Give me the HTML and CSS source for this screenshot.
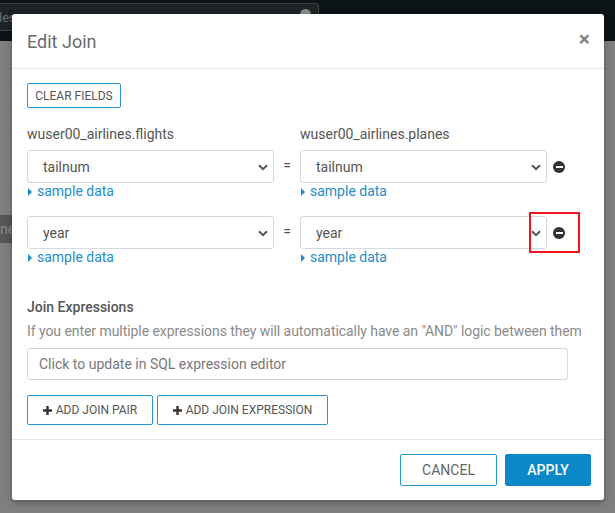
FILE: index.html
```html
<!DOCTYPE html>
<html>
<head>
<meta charset="utf-8">
<link rel="stylesheet" href="styles.css">
</head>
<body>
<div class="page">
  <header class="topbar">
    <div class="search"><span class="search-text">les</span><i class="search-dot"></i></div>
  </header>
  <div class="bg-btn">ne</div>

  <div class="modal">
    <div class="modal-header">
      <h2 class="modal-title">Edit Join</h2>
      <span class="close">&times;</span>
    </div>
    <div class="modal-body">
      <button class="btn btn-outline btn-sm">CLEAR FIELDS</button>

      <div class="pair-grid">
        <div class="tbl-label">wuser00_airlines.flights</div>
        <div></div>
        <div class="tbl-label">wuser00_airlines.planes</div>
        <div></div>
      </div>

      <div class="pair-grid pair">
        <div class="field">
          <div class="select"><span>tailnum</span><svg class="chev" width="10" height="7" viewBox="0 0 10 7"><polyline points="1,1.2 5,5.2 9,1.2" fill="none" stroke="#555" stroke-width="2"/></svg></div>
          <a class="sample"><i class="tri"></i>sample data</a>
        </div>
        <div class="eq">=</div>
        <div class="field">
          <div class="select"><span>tailnum</span><svg class="chev" width="10" height="7" viewBox="0 0 10 7"><polyline points="1,1.2 5,5.2 9,1.2" fill="none" stroke="#555" stroke-width="2"/></svg></div>
          <a class="sample"><i class="tri"></i>sample data</a>
        </div>
        <div class="rm"><i class="minus"></i></div>
      </div>

      <div class="pair-grid pair pair-2">
        <div class="field">
          <div class="select"><span>year</span><svg class="chev" width="10" height="7" viewBox="0 0 10 7"><polyline points="1,1.2 5,5.2 9,1.2" fill="none" stroke="#555" stroke-width="2"/></svg></div>
          <a class="sample"><i class="tri"></i>sample data</a>
        </div>
        <div class="eq">=</div>
        <div class="field">
          <div class="select"><span>year</span><svg class="chev" width="10" height="7" viewBox="0 0 10 7"><polyline points="1,1.2 5,5.2 9,1.2" fill="none" stroke="#555" stroke-width="2"/></svg></div>
          <a class="sample"><i class="tri"></i>sample data</a>
        </div>
        <div class="rm"><i class="minus"></i></div>
        <div class="highlight"></div>
      </div>

      <h3 class="section-title">Join Expressions</h3>
      <p class="help">If you enter multiple expressions they will automatically have an "AND" logic between them</p>
      <div class="expr-input">Click to update in SQL expression editor</div>

      <div class="actions">
        <button class="btn btn-outline btn-add"><svg width="9" height="9" viewBox="0 0 9 9"><path d="M3.3 0h2.4v3.3H9v2.4H5.7V9H3.3V5.7H0V3.3h3.3z" fill="#333"/></svg>ADD JOIN PAIR</button>
        <button class="btn btn-outline btn-add"><svg width="9" height="9" viewBox="0 0 9 9"><path d="M3.3 0h2.4v3.3H9v2.4H5.7V9H3.3V5.7H0V3.3h3.3z" fill="#333"/></svg>ADD JOIN EXPRESSION</button>
      </div>
    </div>
    <div class="modal-footer">
      <button class="btn btn-outline btn-lg">CANCEL</button>
      <button class="btn btn-primary btn-lg">APPLY</button>
    </div>
  </div>
</div>
</body>
</html>
```
FILE: styles.css
```css
* { box-sizing: border-box; }
html, body { margin: 0; padding: 0; }
body {
  width: 615px;
  height: 513px;
  overflow: hidden;
  background: #7f7f7f;
  font-family: Roboto, "Liberation Sans", sans-serif;
  color: #555;
}
.page { position: relative; width: 615px; height: 513px; }

.topbar {
  height: 41px;
  background: #0b1317;
  padding-top: 3px;
}
.search {
  width: 319px;
  height: 28px;
  background: #1e2326;
  border: 1px solid #3c4043;
  border-left: none;
  border-radius: 0 3px 3px 0;
  display: flex;
  align-items: center;
  font-size: 13px;
  color: #6d7174;
}
.search-text { margin-left: -1px; }
.search-dot {
  margin-left: auto;
  margin-right: 7px;
  margin-top: -6px;
  width: 11px;
  height: 11px;
  border-radius: 50%;
  background: #8a8c8e;
}
.bg-btn {
  margin-top: 174px;
  width: 40px;
  height: 28px;
  background: #565656;
  color: #8c8c8c;
  font-size: 14px;
  line-height: 28px;
  padding-left: 0;
}

.modal {
  position: absolute;
  left: 12px;
  top: 14px;
  width: 592px;
  height: 486px;
  background: #fff;
  border-radius: 3px;
  box-shadow: 0 2px 6px rgba(0,0,0,0.35);
  display: flex;
  flex-direction: column;
}
.modal-header {
  height: 55px;
  border-bottom: 1px solid #e3e6ea;
  display: flex;
  align-items: center;
  justify-content: space-between;
  padding: 0 14px 0 15px;
}
.modal-title {
  margin: 0;
  font-size: 18px;
  font-weight: 400;
  color: #6a6a6a;
  padding-top: 0;
}
.close {
  font-size: 21px;
  font-weight: 700;
  color: #858585;
  line-height: 1;
  margin-top: -4px;
}
.modal-body {
  padding: 14px 15px 14px;
  flex: 1;
}
.btn {
  font-family: Roboto, "Liberation Sans", sans-serif;
  background: #fff;
  border-radius: 2px;
  cursor: pointer;
  display: inline-flex;
  align-items: center;
  justify-content: center;
  padding: 0;
}
.btn-outline {
  border: 1px solid #2b95d1;
  color: #555;
}
.btn-sm {
  width: 94px;
  height: 25px;
  font-size: 12px;
}
.pair-grid {
  display: grid;
  grid-template-columns: 247px 26px 247px 30px;
  align-items: start;
}
.tbl-label {
  margin-top: 16px;
  font-size: 14px;
  line-height: 20px;
  color: #555;
}
.pair { margin-top: 6px; position: relative; }
.pair-2 { margin-top: 16px; }
.select {
  height: 33px;
  border: 1px solid #d5d8dc;
  border-radius: 3px;
  display: flex;
  align-items: center;
  justify-content: space-between;
  padding: 0 5px 0 15px;
  font-size: 14px;
  color: #555;
}
.chev { display: block; margin-top: 1px; }
.sample {
  display: flex;
  align-items: center;
  font-size: 14px;
  line-height: 17px;
  color: #1e8ec9;
  margin-top: 0;
}
.tri {
  width: 0;
  height: 0;
  border-top: 4px solid transparent;
  border-bottom: 4px solid transparent;
  border-left: 4px solid #1e8ec9;
  margin: 0 5px 0 1px;
}
.eq {
  height: 33px;
  line-height: 31px;
  text-align: center;
  font-size: 14px;
  color: #555;
  padding-left: 0;
}
.rm {
  height: 33px;
  display: flex;
  align-items: center;
  padding-left: 6px;
}
.minus {
  width: 12px;
  height: 12px;
  border-radius: 50%;
  background: #333;
  display: flex;
  align-items: center;
  justify-content: center;
}
.minus::after {
  content: "";
  width: 7px;
  height: 2px;
  background: #fff;
}
.highlight {
  position: absolute;
  left: 502px;
  top: -4px;
  width: 51px;
  height: 41px;
  border: 2px solid #f0151f;
}
.section-title {
  margin: 31px 0 0;
  font-size: 14px;
  font-weight: 500;
  line-height: 20px;
  color: #555;
}
.help {
  margin: 4px 0 0;
  font-size: 14px;
  line-height: 20px;
  color: #8a8a8a;
  white-space: nowrap;
  letter-spacing: -0.06px;
}
.expr-input {
  margin-top: 7px;
  width: 541px;
  height: 32px;
  border: 1px solid #d5d8dc;
  border-radius: 3px;
  padding: 0 11px;
  font-size: 14px;
  line-height: 30px;
  color: #777;
}
.actions {
  margin-top: 15px;
  display: flex;
  gap: 4px;
}
.btn-add {
  height: 30px;
  font-size: 12px;
  color: #555;
  gap: 4px;
}
.btn-add:first-child { width: 126px; }
.btn-add:last-child { width: 171px; }
.modal-footer {
  border-top: 1px solid #e3e6ea;
  padding: 14px 13px 14px;
  display: flex;
  justify-content: flex-end;
  gap: 8px;
}
.btn-lg {
  height: 32px;
  font-size: 14px;
}
.modal-footer .btn-outline { width: 97px; color: #666; }
.btn-primary {
  width: 86px;
  background: #0b88c7;
  border: 1px solid #0b88c7;
  color: #fff;
  font-weight: 500;
}
```
